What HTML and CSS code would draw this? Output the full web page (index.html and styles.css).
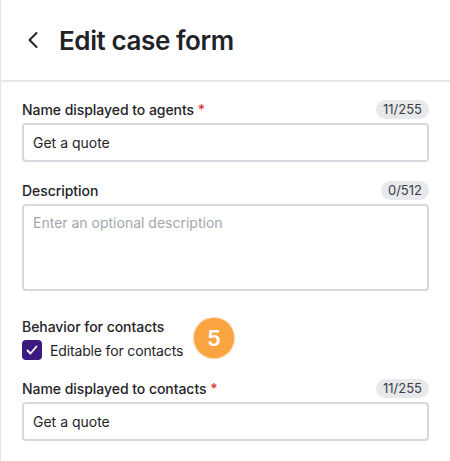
FILE: index.html
```html
<!DOCTYPE html>
<html>
<head>
<meta charset="utf-8">
<link rel="stylesheet" href="styles.css">
</head>
<body>
<div class="page">
  <header class="header">
    <svg class="back" width="12" height="18" viewBox="0 0 12 18"><path d="M9.5 2 L2.5 9 L9.5 16" fill="none" stroke="#1f2328" stroke-width="2" stroke-linecap="round" stroke-linejoin="round"/></svg>
    <h1 class="title">Edit case form</h1>
  </header>
  <main class="content">
    <div class="field">
      <div class="label-row">
        <span class="label">Name displayed to agents <span class="req">*</span></span>
        <span class="count">11/255</span>
      </div>
      <div class="input">Get a quote</div>
    </div>
    <div class="field">
      <div class="label-row">
        <span class="label">Description</span>
        <span class="count">0/512</span>
      </div>
      <div class="textarea">Enter an optional description</div>
    </div>
    <div class="behavior">
      <div class="label">Behavior for contacts</div>
      <div class="check-row">
        <span class="checkbox"><svg width="14" height="14" viewBox="0 0 14 14"><path d="M2.5 7.5 L5.5 10.5 L11.5 3.5" fill="none" stroke="#fff" stroke-width="1.8" stroke-linecap="round" stroke-linejoin="round"/></svg></span>
        <span class="check-label">Editable for contacts</span>
        <span class="step">5</span>
      </div>
    </div>
    <div class="field">
      <div class="label-row">
        <span class="label">Name displayed to contacts <span class="req">*</span></span>
        <span class="count">11/255</span>
      </div>
      <div class="input">Get a quote</div>
    </div>
  </main>
</div>
</body>
</html>
```
FILE: styles.css
```css
html, body {
  margin: 0;
  padding: 0;
  background: #fff;
}
body {
  font-family: Inter, "Noto Sans", sans-serif;
  color: #1f2328;
}
.page {
  border-left: 1px solid #e3e5e8;
  min-height: 461px;
  box-sizing: border-box;
}
.header {
  height: 82px;
  border-bottom: 2px solid #e6e7ea;
  display: flex;
  align-items: center;
  padding-left: 26px;
  box-sizing: border-box;
}
.back {
  margin-right: 20px;
}
.title {
  margin: 0;
  font-size: 26px;
  font-weight: 600;
  letter-spacing: -0.4px;
  color: #1f2328;
}
.content {
  padding: 17px 21px 0 21px;
}
.field {
  margin-bottom: 18px;
}
.label-row {
  display: flex;
  justify-content: space-between;
  align-items: center;
  height: 20px;
  margin-bottom: 4px;
}
.label {
  font-size: 14px;
  font-weight: 500;
  color: #1f2328;
  letter-spacing: -0.05px;
}
.req {
  color: #d93a3a;
}
.count {
  background: #e8e9ec;
  color: #3a3f45;
  font-size: 13px;
  border-radius: 10px;
  padding: 0 7px;
  height: 19px;
  line-height: 19px;
}
.input {
  border: 2px solid #d5d8dc;
  border-radius: 4px;
  height: 39px;
  box-sizing: border-box;
  display: flex;
  align-items: center;
  padding-left: 9px;
  font-size: 14px;
  color: #1f2328;
}
.textarea {
  border: 2px solid #d5d8dc;
  border-radius: 4px;
  height: 87px;
  box-sizing: border-box;
  padding: 8px 9px;
  font-size: 14px;
  color: #a3a7ad;
  margin-top: 2px;
}
.behavior {
  margin-top: 27px;
  margin-bottom: 18px;
}
.check-row {
  display: flex;
  align-items: center;
  margin-top: 5px;
  position: relative;
}
.checkbox {
  width: 20px;
  height: 20px;
  border-radius: 4px;
  background: #3c1a7e;
  display: flex;
  align-items: center;
  justify-content: center;
}
.check-label {
  font-size: 14px;
  margin-left: 8px;
  color: #1f2328;
  letter-spacing: -0.15px;
}
.step {
  position: absolute;
  left: 172px;
  top: -22px;
  width: 40px;
  height: 40px;
  border-radius: 50%;
  background: #f9a440;
  color: #fff;
  font-size: 22px;
  font-weight: 600;
  display: flex;
  align-items: center;
  justify-content: center;
  box-shadow: 0 0 1px 1px rgba(249,164,64,0.5);
}
```
